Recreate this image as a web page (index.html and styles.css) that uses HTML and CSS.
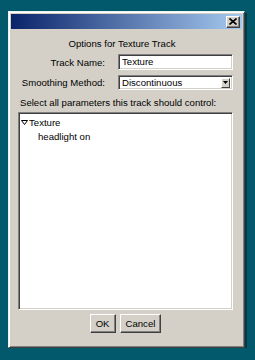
FILE: index.html
```html
<!DOCTYPE html>
<html lang="en">
<head>
    <meta charset="UTF-8">
    <meta name="viewport" content="width=device-width, initial-scale=1.0">
    <title>Options for Texture Track</title>
    <link rel="stylesheet" href="styles.css">
</head>
<body>

    <div class="window">
        <div class="titlebar">
            <span class="close-btn">
                <svg width="8" height="7" viewBox="0 0 8 7">
                    <path d="M0.5 0.5 L7.5 6.5 M7.5 0.5 L0.5 6.5" stroke="#000" stroke-width="1.6"/>
                </svg>
            </span>
        </div>

        <div class="content">
            <div class="heading">Options for Texture Track</div>

            <!-- Поля трека -->
            <div class="form-grid">
                <label class="label" for="trackName">Track Name:</label>
                <div class="field">Texture</div>

                <label class="label" for="smoothing">Smoothing Method:</label>
                <div class="combo">
                    <span class="combo-text">Discontinuous</span>
                    <span class="combo-arrow">
                        <svg width="5" height="3" viewBox="0 0 5 3"><path d="M0 0 H5 L2.5 3 Z" fill="#000"/></svg>
                    </span>
                </div>
            </div>

            <div class="hint">Select all parameters this track should control:</div>

            <!-- Дерево параметров -->
            <div class="tree">
                <div class="tree-node">
                    <svg class="twisty" width="7" height="5" viewBox="0 0 7 5">
                        <path d="M0.5 0.5 H6.5 L3.5 4.5 Z" fill="none" stroke="#000" stroke-width="1"/>
                    </svg>
                    <span>Texture</span>
                </div>
                <div class="tree-leaf">headlight on</div>
            </div>

            <div class="buttons">
                <button class="button">OK</button>
                <button class="button">Cancel</button>
            </div>
        </div>
    </div>

</body>
</html>
```

FILE: styles.css
```css
 body {
     font-family: "Liberation Sans", Arial, sans-serif;
     font-size: 9.6px;
     margin: 0;
     padding: 11px 0 0 8px;
     background-color: #02596b;
     color: #000;
 }
.window {
     width: 231px;
     height: 331px;
     background-color: #d4d0c8;
     border: 1px solid;
     border-color: #e8f4f4 #404040 #404040 #e8f4f4;
     box-shadow: inset 1px 1px #ffffff, inset -1px -1px #808080, 2px 2px 0 rgba(0, 0, 0, 0.35);
     padding: 2px;
     display: flex;
     flex-direction: column;
 }
.titlebar {
     height: 15px;
     background: linear-gradient(to right, #0a246a, #a6caf0);
     display: flex;
     align-items: center;
     justify-content: flex-end;
     padding-right: 2px;
 }
.close-btn {
     width: 12px;
     height: 10px;
     background-color: #d4d0c8;
     border: 1px solid;
     border-color: #fff #404040 #404040 #fff;
     box-shadow: inset -1px -1px #808080;
     display: flex;
     align-items: center;
     justify-content: center;
 }
.content {
     flex: 1;
     display: flex;
     flex-direction: column;
     padding: 9px 9px 12px 7px;
 }
.heading {
     text-align: center;
     line-height: 12px;
     margin-right: 7px;
     margin-bottom: 4px;
 }
.form-grid {
     display: grid;
     grid-template-columns: 87px 1fr;
     column-gap: 13px;
     row-gap: 5px;
     align-items: center;
 }
.label {
     text-align: right;
 }
.field,.combo,.tree {
     background: white;
     border: 1px solid;
     border-color: #808080 #fff #fff #808080;
     box-shadow: inset 1px 1px #404040, inset -1px -1px #d4d0c8;
 }
.field {
     height: 14px;
     line-height: 14px;
     padding-left: 3px;
 }
.combo {
     height: 13px;
     display: flex;
     align-items: center;
     justify-content: space-between;
     padding: 0 2px 0 3px;
 }
.combo-arrow {
     width: 7px;
     height: 8px;
     background-color: #d4d0c8;
     border: 1px solid;
     border-color: #fff #404040 #404040 #fff;
     display: flex;
     align-items: center;
     justify-content: center;
 }
.hint {
     margin-top: 7px;
     line-height: 12px;
     padding-left: 2px;
     margin-bottom: 3px;
 }
.tree {
     flex: 1;
     padding: 3px 2px;
 }
.tree-node {
     display: flex;
     align-items: center;
     gap: 1px;
     line-height: 13px;
 }
.tree-leaf {
     line-height: 15px;
     padding-left: 17px;
 }
.buttons {
     display: flex;
     justify-content: center;
     gap: 4px;
     margin-top: 4px;
 }
.button {
     font-family: inherit;
     font-size: 9.6px;
     color: #000;
     height: 19px;
     padding: 0 5px;
     background-color: #d4d0c8;
     border: 1px solid;
     border-color: #fff #404040 #404040 #fff;
     box-shadow: inset -1px -1px #808080;
 }
```
